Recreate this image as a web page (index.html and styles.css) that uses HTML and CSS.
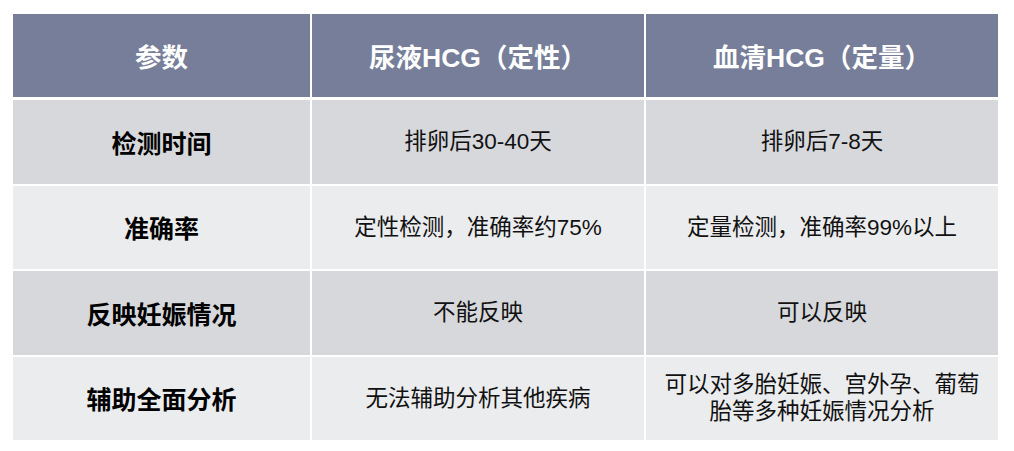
FILE: index.html
```html
<!DOCTYPE html>
<html lang="zh-CN">
<head>
<meta charset="utf-8">
<title>HCG对比</title>
<link rel="stylesheet" href="styles.css">
</head>
<body>
<div class="page">
  <div class="table">
    <div class="cell head">参数</div>
    <div class="cell head">尿液HCG（定性）</div>
    <div class="cell head">血清HCG（定量）</div>

    <div class="cell key odd">检测时间</div>
    <div class="cell val odd">排卵后30-40天</div>
    <div class="cell val odd">排卵后7-8天</div>

    <div class="cell key even">准确率</div>
    <div class="cell val even">定性检测，准确率约75%</div>
    <div class="cell val even">定量检测，准确率99%以上</div>

    <div class="cell key odd">反映妊娠情况</div>
    <div class="cell val odd">不能反映</div>
    <div class="cell val odd">可以反映</div>

    <div class="cell key even">辅助全面分析</div>
    <div class="cell val even">无法辅助分析其他疾病</div>
    <div class="cell val even">可以对多胎妊娠、宫外孕、葡萄胎等多种妊娠情况分析</div>
  </div>
</div>
</body>
</html>
```

FILE: styles.css
```css
html, body {
  margin: 0;
  padding: 0;
  background: #ffffff;
}

.page {
  padding: 14px 0 0 13px;
  font-family: "Liberation Sans", "Noto Sans CJK SC", sans-serif;
}

.table {
  display: grid;
  grid-template-columns: 297px 332px 352px;
  grid-template-rows: 84px repeat(4, 83.5px);
  column-gap: 2px;
  row-gap: 2px;
  width: 985px;
  background: #ffffff;
}

.cell {
  display: flex;
  align-items: center;
  justify-content: center;
  text-align: center;
  padding: 0 14px;
  box-sizing: border-box;
}

.head {
  background: #767e99;
  color: #ffffff;
  font-weight: bold;
  font-size: 26.5px;
  border-bottom: 1px solid #ffffff;
}

.odd {
  background: #d7d8dc;
}

.even {
  background: #ebecee;
}

.key {
  font-weight: bold;
  font-size: 25px;
  color: #000000;
}

.val {
  font-size: 22.5px;
  line-height: 27px;
  color: #111111;
}
```
